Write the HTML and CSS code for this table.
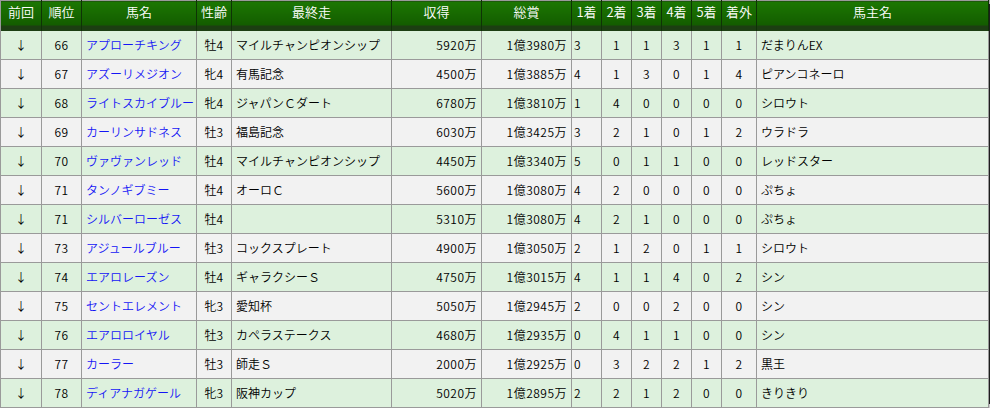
FILE: index.html
```html
<!DOCTYPE html>
<html lang="ja">
<head>
<meta charset="utf-8">
<link rel="stylesheet" href="styles.css">
</head>
<body>
<div class="frame">
<table class="rank">
<colgroup>
<col class="c-prev"><col class="c-rank"><col class="c-name"><col class="c-age"><col class="c-last"><col class="c-earn"><col class="c-total"><col class="c-n"><col class="c-n"><col class="c-n"><col class="c-n"><col class="c-n"><col class="c-out"><col class="c-owner">
</colgroup>
<thead>
<tr><th>前回</th><th>順位</th><th>馬名</th><th>性齢</th><th>最終走</th><th>収得</th><th>総賞</th><th>1着</th><th>2着</th><th>3着</th><th>4着</th><th>5着</th><th>着外</th><th>馬主名</th></tr>
</thead>
<tbody>
<tr class="g"><td class="c">↓</td><td class="c num">66</td><td class="horse">アプローチキング</td><td class="c">牡<span class="num">4</span></td><td>マイルチャンピオンシップ</td><td class="r num">5920万</td><td class="r num">1億3980万</td><td class="l num">3</td><td class="c num">1</td><td class="c num">1</td><td class="c num">3</td><td class="c num">1</td><td class="c num">1</td><td>だまりんEX</td></tr>
<tr class="w"><td class="c">↓</td><td class="c num">67</td><td class="horse">アズーリメジオン</td><td class="c">牝<span class="num">4</span></td><td>有馬記念</td><td class="r num">4500万</td><td class="r num">1億3885万</td><td class="l num">4</td><td class="c num">1</td><td class="c num">3</td><td class="c num">0</td><td class="c num">1</td><td class="c num">4</td><td>ピアンコネーロ</td></tr>
<tr class="g"><td class="c">↓</td><td class="c num">68</td><td class="horse">ライトスカイブルー</td><td class="c">牝<span class="num">4</span></td><td>ジャパンＣダート</td><td class="r num">6780万</td><td class="r num">1億3810万</td><td class="l num">1</td><td class="c num">4</td><td class="c num">0</td><td class="c num">0</td><td class="c num">0</td><td class="c num">0</td><td>シロウト</td></tr>
<tr class="w"><td class="c">↓</td><td class="c num">69</td><td class="horse">カーリンサドネス</td><td class="c">牡<span class="num">3</span></td><td>福島記念</td><td class="r num">6030万</td><td class="r num">1億3425万</td><td class="l num">3</td><td class="c num">2</td><td class="c num">1</td><td class="c num">0</td><td class="c num">1</td><td class="c num">2</td><td>ウラドラ</td></tr>
<tr class="g"><td class="c">↓</td><td class="c num">70</td><td class="horse">ヴァヴァンレッド</td><td class="c">牡<span class="num">4</span></td><td>マイルチャンピオンシップ</td><td class="r num">4450万</td><td class="r num">1億3340万</td><td class="l num">5</td><td class="c num">0</td><td class="c num">1</td><td class="c num">1</td><td class="c num">0</td><td class="c num">0</td><td>レッドスター</td></tr>
<tr class="w"><td class="c">↓</td><td class="c num">71</td><td class="horse">タンノギブミー</td><td class="c">牡<span class="num">4</span></td><td>オーロＣ</td><td class="r num">5600万</td><td class="r num">1億3080万</td><td class="l num">4</td><td class="c num">2</td><td class="c num">0</td><td class="c num">0</td><td class="c num">0</td><td class="c num">0</td><td>ぷちょ</td></tr>
<tr class="g"><td class="c">↓</td><td class="c num">71</td><td class="horse">シルバーローゼス</td><td class="c">牡<span class="num">4</span></td><td></td><td class="r num">5310万</td><td class="r num">1億3080万</td><td class="l num">4</td><td class="c num">2</td><td class="c num">1</td><td class="c num">0</td><td class="c num">0</td><td class="c num">0</td><td>ぷちょ</td></tr>
<tr class="w"><td class="c">↓</td><td class="c num">73</td><td class="horse">アジュールブルー</td><td class="c">牡<span class="num">3</span></td><td>コックスプレート</td><td class="r num">4900万</td><td class="r num">1億3050万</td><td class="l num">2</td><td class="c num">1</td><td class="c num">2</td><td class="c num">0</td><td class="c num">1</td><td class="c num">1</td><td>シロウト</td></tr>
<tr class="g"><td class="c">↓</td><td class="c num">74</td><td class="horse">エアロレーズン</td><td class="c">牡<span class="num">4</span></td><td>ギャラクシーＳ</td><td class="r num">4750万</td><td class="r num">1億3015万</td><td class="l num">4</td><td class="c num">1</td><td class="c num">1</td><td class="c num">4</td><td class="c num">0</td><td class="c num">2</td><td>シン</td></tr>
<tr class="w"><td class="c">↓</td><td class="c num">75</td><td class="horse">セントエレメント</td><td class="c">牝<span class="num">3</span></td><td>愛知杯</td><td class="r num">5050万</td><td class="r num">1億2945万</td><td class="l num">2</td><td class="c num">0</td><td class="c num">0</td><td class="c num">2</td><td class="c num">0</td><td class="c num">0</td><td>シン</td></tr>
<tr class="g"><td class="c">↓</td><td class="c num">76</td><td class="horse">エアロロイヤル</td><td class="c">牡<span class="num">3</span></td><td>カペラステークス</td><td class="r num">4680万</td><td class="r num">1億2935万</td><td class="l num">0</td><td class="c num">4</td><td class="c num">1</td><td class="c num">1</td><td class="c num">0</td><td class="c num">0</td><td>シン</td></tr>
<tr class="w"><td class="c">↓</td><td class="c num">77</td><td class="horse">カーラー</td><td class="c">牡<span class="num">3</span></td><td>師走Ｓ</td><td class="r num">2000万</td><td class="r num">1億2925万</td><td class="l num">0</td><td class="c num">3</td><td class="c num">2</td><td class="c num">2</td><td class="c num">1</td><td class="c num">2</td><td>黒王</td></tr>
<tr class="g"><td class="c">↓</td><td class="c num">78</td><td class="horse">ディアナガゲール</td><td class="c">牝<span class="num">3</span></td><td>阪神カップ</td><td class="r num">5020万</td><td class="r num">1億2895万</td><td class="l num">2</td><td class="c num">2</td><td class="c num">1</td><td class="c num">2</td><td class="c num">0</td><td class="c num">0</td><td>きりきり</td></tr>
</tbody>
</table>
<div class="edge"><div class="edge-top"></div><div class="edge-mid"></div><div class="edge-bot"></div></div>
</div>
</body>
</html>
```

FILE: styles.css
```css
html, body {
  margin: 0;
  padding: 0;
  background: #f0f0f0;
}
body {
  font-family: "Noto Sans CJK JP", "Liberation Sans", sans-serif;
  font-size: 12px;
  font-weight: 350;
  color: #000;
}
.frame {
  display: flex;
  width: 990px;
  height: 408px;
  overflow: hidden;
}
.rank {
  border-collapse: collapse;
  table-layout: fixed;
  width: 988px;
  flex: none;
}
.c-prev { width: 41px; }
.c-rank { width: 40px; }
.c-name { width: 115px; }
.c-age { width: 35px; }
.c-last { width: 160px; }
.c-earn { width: 90px; }
.c-total { width: 90px; }
.c-n { width: 30px; }
.c-out { width: 35px; }
.c-owner { width: 232px; }

.rank th {
  height: 30px;
  padding: 0 0 7px;
  box-sizing: border-box;
  color: #fff;
  font-weight: 350;
  font-size: 13px;
  text-align: center;
  background: linear-gradient(to bottom, #1c7702 0%, #135c00 80%, #1c3e12 80%, #1c3e12 100%);
  border-top: 1px solid #9a9a9a;
  border-left: 1px solid #0e3306;
  border-right: 1px solid #0e3306;
  line-height: 18px;
}
.rank th:first-child { border-left: 1px solid #9a9a9a; }
.rank td {
  height: 27.77px;
  padding: 0 4px;
  border: 1px solid #9a9a9a;
  white-space: nowrap;
  overflow: hidden;
  line-height: 16px;
  vertical-align: middle;
}
.rank tbody tr:first-child td { border-top: none; }
.g td { background: #ddf1dd; }
.w td { background: #f2f2f2; }
.rank td.c { text-align: center; padding: 0; }
.rank td.r { text-align: right; }
.rank td.l { text-align: left; padding-left: 2px; }
.num {
  font-family: "Liberation Sans Narrow", "Noto Sans CJK JP", sans-serif;
  letter-spacing: 0.5px;
}
.horse { color: #1515f5; }
.edge {
  flex: none;
  width: 2px;
  display: flex;
  flex-direction: column;
}
.edge-top { height: 4px; background: #a8a8a8; }
.edge-mid { flex: 1; background: #1e1e1e; }
.edge-bot { height: 4px; background: #c8c8c8; }
```
